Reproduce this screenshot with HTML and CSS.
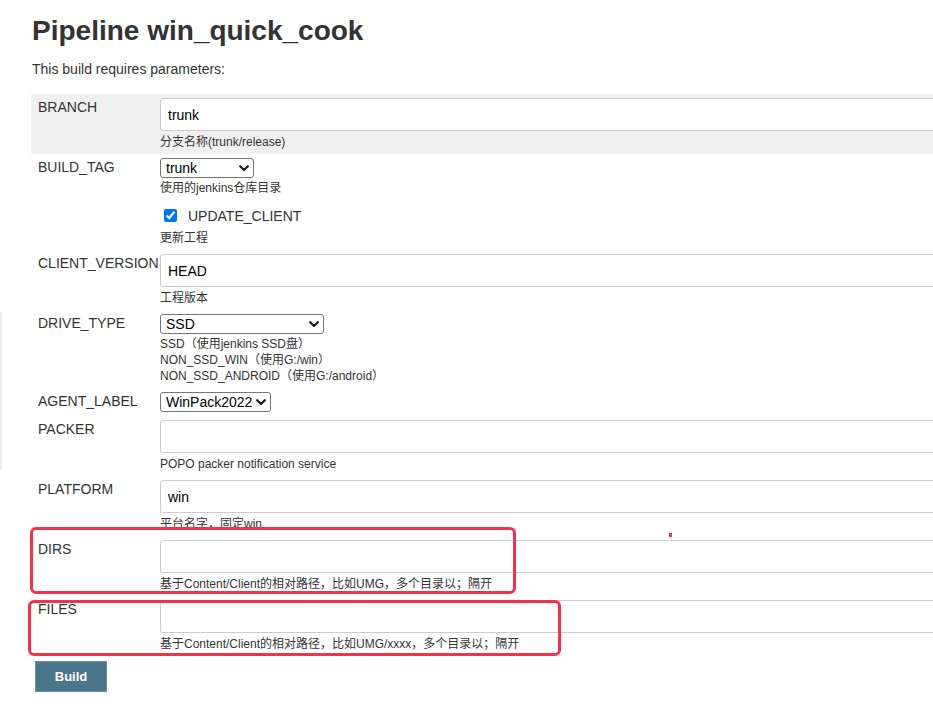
FILE: index.html
```html
<!DOCTYPE html>
<html lang="zh-CN">
<head>
<meta charset="utf-8">
<title>Pipeline win_quick_cook</title>
<link rel="stylesheet" href="styles.css">
</head>
<body>
<div class="page">
  <h1 class="title">Pipeline win_quick_cook</h1>
  <p class="intro">This build requires parameters:</p>

  <div class="params">
    <div class="param shaded">
      <div class="name">BRANCH</div>
      <div class="main">
        <input class="text" type="text" value="trunk">
        <div class="desc">分支名称(trunk/release)</div>
      </div>
    </div>

    <div class="param">
      <div class="name">BUILD_TAG</div>
      <div class="main">
        <span class="select w-tag">
          <select><option>trunk</option></select>
          <svg class="chev" viewBox="0 0 10 7" width="10" height="7"><path d="M1.2 1.2 L5 5 L8.8 1.2" fill="none" stroke="#1a1a1a" stroke-width="2.2" stroke-linecap="round" stroke-linejoin="round"/></svg>
        </span>
        <div class="desc after-select">使用的jenkins仓库目录</div>
      </div>
    </div>

    <div class="param">
      <div class="name"></div>
      <div class="main">
        <label class="check-line"><input class="check" type="checkbox" checked><span class="check-label">UPDATE_CLIENT</span></label>
        <div class="desc">更新工程</div>
      </div>
    </div>

    <div class="param">
      <div class="name">CLIENT_VERSION</div>
      <div class="main">
        <input class="text" type="text" value="HEAD">
        <div class="desc">工程版本</div>
      </div>
    </div>

    <div class="param">
      <div class="name">DRIVE_TYPE</div>
      <div class="main">
        <span class="select w-drive">
          <select><option>SSD</option></select>
          <svg class="chev" viewBox="0 0 10 7" width="10" height="7"><path d="M1.2 1.2 L5 5 L8.8 1.2" fill="none" stroke="#1a1a1a" stroke-width="2.2" stroke-linecap="round" stroke-linejoin="round"/></svg>
        </span>
        <div class="desc after-select">SSD（使用jenkins SSD盘）<br>NON_SSD_WIN（使用G:/win）<br>NON_SSD_ANDROID（使用G:/android）</div>
      </div>
    </div>

    <div class="param">
      <div class="name">AGENT_LABEL</div>
      <div class="main">
        <span class="select w-agent">
          <select><option>WinPack2022</option></select>
          <svg class="chev" viewBox="0 0 10 7" width="10" height="7"><path d="M1.2 1.2 L5 5 L8.8 1.2" fill="none" stroke="#1a1a1a" stroke-width="2.2" stroke-linecap="round" stroke-linejoin="round"/></svg>
        </span>
      </div>
    </div>

    <div class="param">
      <div class="name">PACKER</div>
      <div class="main">
        <input class="text" type="text" value="">
        <div class="desc">POPO packer notification service</div>
      </div>
    </div>

    <div class="param">
      <div class="name">PLATFORM</div>
      <div class="main">
        <input class="text" type="text" value="win">
        <div class="desc cut">平台名字，固定win</div>
      </div>
    </div>

    <div class="param">
      <div class="name">DIRS</div>
      <div class="main">
        <input class="text" type="text" value="">
        <div class="desc">基于Content/Client的相对路径，比如UMG，多个目录以；隔开</div>
      </div>
    </div>

    <div class="param">
      <div class="name">FILES</div>
      <div class="main">
        <input class="text" type="text" value="">
        <div class="desc">基于Content/Client的相对路径，比如UMG/xxxx，多个目录以；隔开</div>
      </div>
    </div>
  </div>

  <button class="build" type="button">Build</button>

  <div class="edge-line"></div>
  <div class="mark mark-dirs"></div>
  <div class="mark mark-files"></div>
  <div class="mark-dot"></div>
</div>
</body>
</html>
```

FILE: styles.css
```css
html, body {
  margin: 0;
  padding: 0;
  overflow: hidden;
  background: #fff;
}

body {
  font-family: "Liberation Sans", Arial, "Noto Sans CJK SC", sans-serif;
  color: #333;
  font-size: 14px;
}

.page {
  position: relative;
  width: 1120px;
  padding: 15px 0 40px 32px;
  box-sizing: border-box;
}

.title {
  margin: 0;
  font-size: 28px;
  line-height: 32px;
  font-weight: bold;
  color: #333;
}

.intro {
  margin: 14px 0 0;
  font-size: 14px;
  line-height: 16px;
}

.params {
  margin: 17px 0 0 -1px;
}

.param {
  display: grid;
  grid-template-columns: 129px 1fr;
  padding: 4px 0;
}

.param.shaded {
  background: #f0f0f0;
}

.name {
  padding: 1px 0 0 7px;
  font-size: 14px;
  line-height: 16px;
  color: #333;
  white-space: nowrap;
}

.main {
  display: flex;
  flex-direction: column;
  align-items: flex-start;
  min-width: 0;
}

.text {
  display: block;
  width: 100%;
  height: 33px;
  box-sizing: border-box;
  margin: 0;
  padding: 0 7px;
  border: 1px solid #ccc;
  border-radius: 3px;
  background: #fff;
  font-family: "Liberation Sans", Arial, sans-serif;
  font-size: 14px;
  color: #000;
  outline: none;
}

.desc {
  padding-top: 3px;
  font-size: 12px;
  line-height: 16px;
  color: #333;
  white-space: nowrap;
}

.desc.after-select {
  padding-top: 2px;
}

.desc.cut {
  height: 11px;
  overflow: hidden;
  margin-bottom: 5px;
}

.select {
  position: relative;
  display: inline-block;
  height: 20px;
}

.select select {
  -webkit-appearance: none;
  appearance: none;
  display: block;
  height: 20px;
  width: 100%;
  box-sizing: border-box;
  margin: 0;
  padding: 0 0 0 5px;
  border: 1px solid #767676;
  border-radius: 3px;
  background: #fff;
  font-family: "Liberation Sans", Arial, sans-serif;
  font-size: 14px;
  line-height: 18px;
  color: #000;
  outline: none;
}

.w-tag { width: 94px; }
.w-drive { width: 164px; }
.w-agent { width: 111px; }

.chev {
  position: absolute;
  right: 5px;
  top: 7px;
  pointer-events: none;
}

.check-line {
  display: flex;
  align-items: center;
  height: 23px;
}

.check {
  width: 13px;
  height: 13px;
  margin: 0 0 0 4px;
  accent-color: #0075ff;
}

.check-label {
  margin-left: 11px;
  font-size: 14px;
  line-height: 16px;
  color: #333;
}

.build {
  display: block;
  margin: 5px 0 0 3px;
  width: 72px;
  height: 31px;
  padding: 0;
  border: 1px solid #6a8ea3;
  background: #4b758b;
  color: #fff;
  font-family: "Liberation Sans", Arial, sans-serif;
  font-size: 13px;
  font-weight: bold;
  cursor: pointer;
}

.edge-line {
  position: absolute;
  left: 0;
  top: 312px;
  width: 2px;
  height: 158px;
  background: #ececec;
}

.mark {
  position: absolute;
  box-sizing: border-box;
  border: 3px solid #f2324b;
  border-radius: 6px;
  pointer-events: none;
}

.mark-dirs {
  left: 30px;
  top: 527px;
  width: 486px;
  height: 67px;
}

.mark-files {
  left: 28px;
  top: 600px;
  width: 533px;
  height: 56px;
}

.mark-dot {
  position: absolute;
  left: 669px;
  top: 533px;
  width: 3px;
  height: 4px;
  background: #f2324b;
}
```
